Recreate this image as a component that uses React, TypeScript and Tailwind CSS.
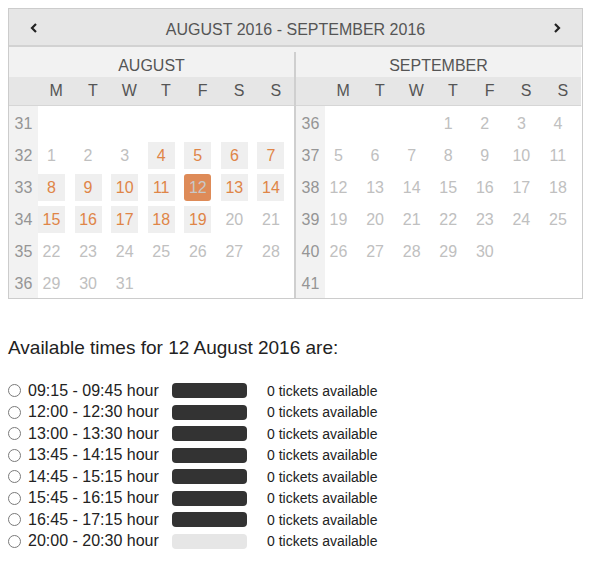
import React from "react";

type Day = { n: number; kind: "off" | "open" | "selected" } | null;

const off = (n: number): Day => ({ n, kind: "off" });
const open = (n: number): Day => ({ n, kind: "open" });

const august: { week: number; days: Day[] }[] = [
  { week: 31, days: [null, null, null, null, null, null, null] },
  { week: 32, days: [off(1), off(2), off(3), open(4), open(5), open(6), open(7)] },
  {
    week: 33,
    days: [open(8), open(9), open(10), open(11), { n: 12, kind: "selected" }, open(13), open(14)],
  },
  { week: 34, days: [open(15), open(16), open(17), open(18), open(19), off(20), off(21)] },
  { week: 35, days: [off(22), off(23), off(24), off(25), off(26), off(27), off(28)] },
  { week: 36, days: [off(29), off(30), off(31), null, null, null, null] },
];

const september: { week: number; days: Day[] }[] = [
  { week: 36, days: [null, null, null, off(1), off(2), off(3), off(4)] },
  { week: 37, days: [off(5), off(6), off(7), off(8), off(9), off(10), off(11)] },
  { week: 38, days: [off(12), off(13), off(14), off(15), off(16), off(17), off(18)] },
  { week: 39, days: [off(19), off(20), off(21), off(22), off(23), off(24), off(25)] },
  { week: 40, days: [off(26), off(27), off(28), off(29), off(30), null, null] },
  { week: 41, days: [null, null, null, null, null, null, null] },
];

const weekdays = ["M", "T", "W", "T", "F", "S", "S"];

const times = [
  { label: "09:15 - 09:45 hour", full: true },
  { label: "12:00 - 12:30 hour", full: true },
  { label: "13:00 - 13:30 hour", full: true },
  { label: "13:45 - 14:15 hour", full: true },
  { label: "14:45 - 15:15 hour", full: true },
  { label: "15:45 - 16:15 hour", full: true },
  { label: "16:45 - 17:15 hour", full: true },
  { label: "20:00 - 20:30 hour", full: false },
];

const DayCell = ({ day }: { day: Day }) => {
  if (!day) return <div className="h-[32px]" />;
  return (
    <div className="h-[32px] pt-[4px]">
      <div
        className={
          day.kind === "selected"
            ? "w-[27px] h-[27px] flex items-center justify-center rounded-[3px] bg-[#de8b58] text-[#c8c8c8]"
            : day.kind === "open"
            ? "w-[27px] h-[27px] flex items-center justify-center bg-[#efefef] text-[#df8547]"
            : "w-[27px] h-[27px] flex items-center justify-center text-[#c0c0c0]"
        }
      >
        {day.n}
      </div>
    </div>
  );
};

const Month = ({ name, rows }: { name: string; rows: { week: number; days: Day[] }[] }) => (
  <div className="w-[285px]">
    <div className="h-[30px] pt-[8px] bg-[#f2f2f2] flex items-center justify-center text-[#555]">{name}</div>
    <div className="h-[29px] bg-[#e6e6e6] border-b border-[#d6d6d6] flex">
      <div className="w-[29px]" />
      <div className="w-[256px] grid grid-cols-7">
        {weekdays.map((d, i) => (
          <div key={i} className="flex items-center justify-center text-[#555]">
            {d}
          </div>
        ))}
      </div>
    </div>
    <div className="flex">
      <div className="w-[29px] bg-[#f2f2f2]">
        {rows.map((r) => (
          <div key={r.week} className="h-[32px] pt-[4px] flex items-center justify-center text-[#959595]">
            {r.week}
          </div>
        ))}
      </div>
      <div className="w-[256px] grid grid-cols-7">
        {rows.map((r) =>
          r.days.map((d, i) => <DayCell key={`${r.week}-${i}`} day={d} />)
        )}
      </div>
    </div>
  </div>
);

export default function App() {
  return (
    <div className="p-2 font-['Liberation_Sans',Arial,sans-serif] text-[16px] leading-none bg-white min-h-[574px]">
      <div className="w-[575px] border border-[#cccccc]">
        <div className="h-[38px] bg-[#e6e6e6] border-b-2 border-[#d2d2d2] flex items-center px-[21px] text-[#555]">
          <svg width="8" height="10" viewBox="0 0 8 10" className="mt-[1px]">
            <polyline points="6,1 2,5 6,9" fill="none" stroke="#222" strokeWidth="2.2" />
          </svg>
          <div className="flex-1 text-center pt-[6px]">AUGUST 2016 - SEPTEMBER 2016</div>
          <svg width="8" height="10" viewBox="0 0 8 10" className="mt-[1px]">
            <polyline points="2,1 6,5 2,9" fill="none" stroke="#222" strokeWidth="2.2" />
          </svg>
        </div>
        <div className="flex">
          <Month name="AUGUST" rows={august} />
          <div className="w-[2px] bg-[#f2f2f2] flex flex-col">
            <div className="flex-1 mt-[5px] bg-[#cfcfcf]" />
          </div>
          <Month name="SEPTEMBER" rows={september} />
        </div>
      </div>

      <div className="mt-[37px] text-[19px] text-[#222] h-[22px] flex items-center">
        Available times for 12 August 2016 are:
      </div>

      <div className="mt-[22px]">
        {times.map((t) => (
          <div key={t.label} className="h-[21.5px] flex items-center text-[#222]">
            <span className="w-[13px] h-[13px] rounded-full border border-[#7a7a7a] bg-white" />
            <span className="ml-[7px] w-[144px] text-[16px]">{t.label}</span>
            <span
              className={
                t.full
                  ? "w-[75px] h-[15px] rounded-[4px] bg-[#333333]"
                  : "w-[75px] h-[15px] rounded-[4px] bg-[#e6e6e6]"
              }
            />
            <span className="ml-[20px] text-[14px]">0 tickets available</span>
          </div>
        ))}
      </div>
    </div>
  );
}
